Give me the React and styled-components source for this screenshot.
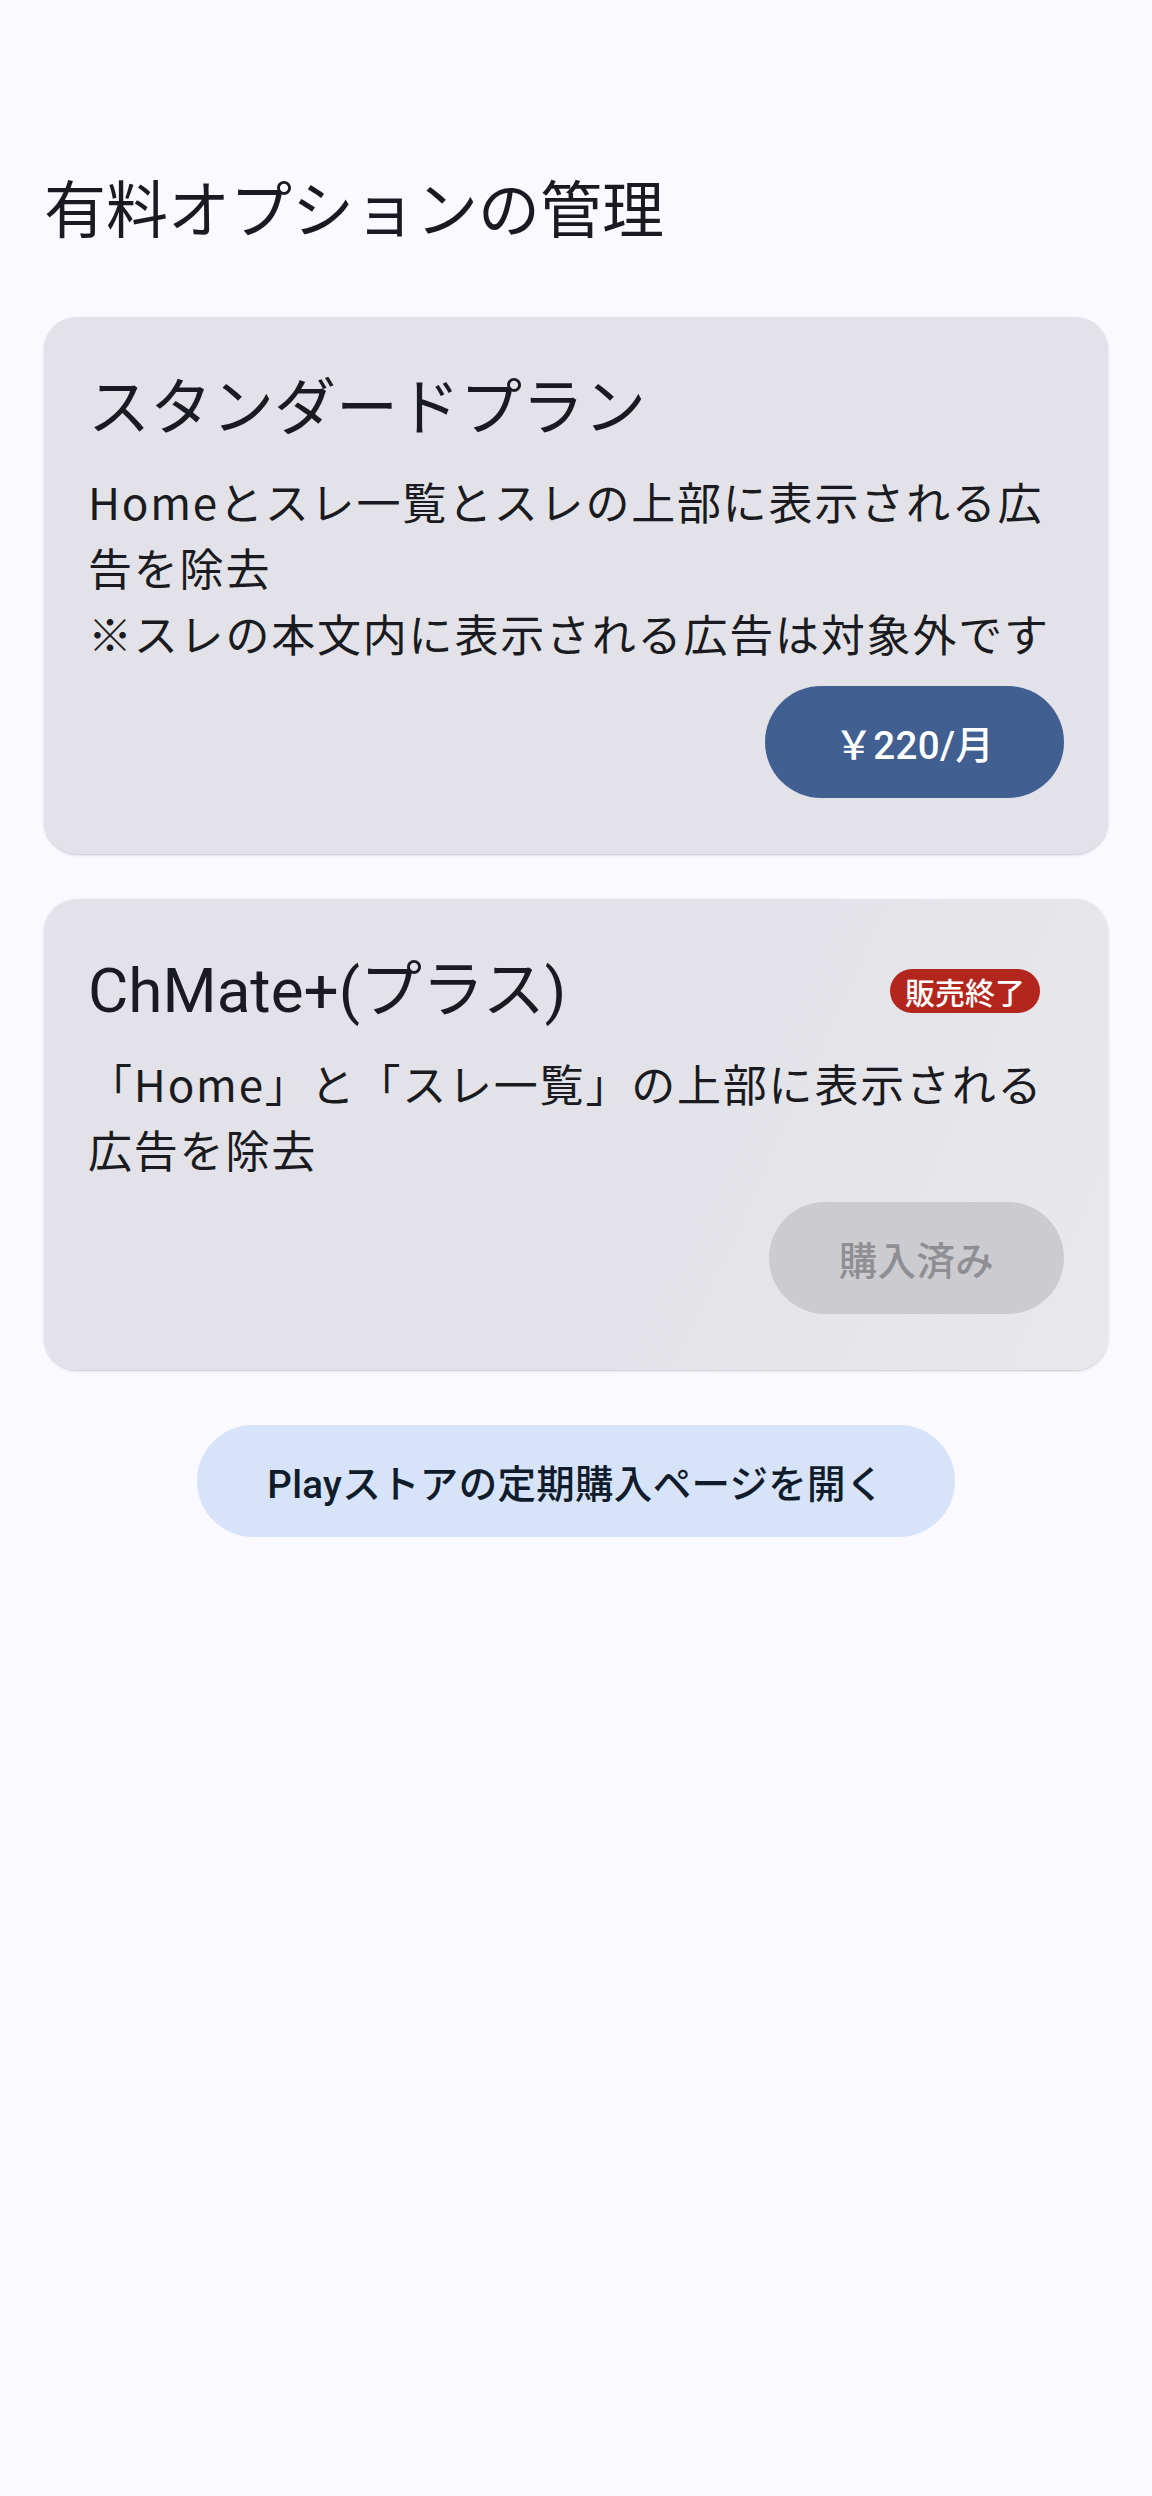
import React from 'react';
import styled, { createGlobalStyle, css } from 'styled-components';

const GlobalStyle = createGlobalStyle`
  body {
    margin: 0;
    background: #f9f9ff;
    font-family: Roboto, "Noto Sans CJK JP", sans-serif;
    color: #1a1b20;
  }
`;

const Page = styled.div`
  padding: 166px 44px 0;
  min-height: 2496px;
  box-sizing: border-box;
`;

const PageTitle = styled.h1`
  margin: 0 0 71px;
  font-size: 62px;
  line-height: 80px;
  font-weight: 400;
  font-family: "Noto Sans CJK JP", sans-serif;
`;

const CardList = styled.div`
  display: flex;
  flex-direction: column;
  gap: 45px;
`;

const Card = styled.section`
  display: flex;
  flex-direction: column;
  padding: 52px 44px 56px;
  border-radius: 33px;
  background: ${p => p.$faded
    ? 'linear-gradient(115deg, #e2e2e8 55%, #e9e8ed 100%)'
    : '#e2e2e8'};
  box-shadow: 0 1px 3px rgba(0, 0, 0, 0.16), 0 1px 1px rgba(0, 0, 0, 0.06);
`;

const CardHead = styled.div`
  display: flex;
  align-items: center;
  justify-content: space-between;
`;

const CardTitle = styled.h2`
  margin: 0;
  font-size: 62px;
  line-height: 80px;
  font-weight: 400;
`;

const Badge = styled.span`
  margin-right: 24px;
  padding: 0 15px;
  height: 44px;
  line-height: 44px;
  border-radius: 22px;
  background: #b3261e;
  color: #fff;
  font-size: 30px;
  font-weight: 500;
  font-family: "Noto Sans CJK JP", sans-serif;
`;

const Body = styled.p`
  margin: 19px 0 0;
  font-size: 44px;
  line-height: 66px;
  letter-spacing: 1.8px;
  font-family: "Noto Sans CJK JP", sans-serif;
`;

const Actions = styled.div`
  display: flex;
  justify-content: flex-end;
  margin-top: 20px;
`;

const variants = {
  primary: css`
    background: #415f91;
    color: #fff;
  `,
  disabled: css`
    background: #cbcbd0;
    color: #8e8e93;
  `,
  tonal: css`
    background: #d7e3f8;
    color: #101c2b;
  `,
};

const PillButton = styled.button`
  height: 112px;
  padding: 0 70px;
  border: 0;
  border-radius: 56px;
  font-family: Roboto, "Noto Sans CJK JP", sans-serif;
  font-size: 38.5px;
  font-weight: 500;
  letter-spacing: 0.3px;
  cursor: pointer;
  ${p => variants[p.$variant]}
`;

const Footer = styled.div`
  display: flex;
  justify-content: center;
  margin-top: 55px;
`;

export default function App() {
  return (
    <Page>
      <GlobalStyle />
      <PageTitle>有料オプションの管理</PageTitle>
      <CardList>
        <Card>
          <CardHead>
            <CardTitle>スタンダードプラン</CardTitle>
          </CardHead>
          <Body>
            Homeとスレ一覧とスレの上部に表示される広告を除去
            <br />
            ※スレの本文内に表示される広告は対象外です
          </Body>
          <Actions>
            <PillButton $variant="primary">￥220/月</PillButton>
          </Actions>
        </Card>
        <Card $faded>
          <CardHead>
            <CardTitle>ChMate+(プラス)</CardTitle>
            <Badge>販売終了</Badge>
          </CardHead>
          <Body>「Home」と「スレ一覧」の上部に表示される広告を除去</Body>
          <Actions>
            <PillButton $variant="disabled" disabled>購入済み</PillButton>
          </Actions>
        </Card>
      </CardList>
      <Footer>
        <PillButton $variant="tonal">Playストアの定期購入ページを開く</PillButton>
      </Footer>
    </Page>
  );
}
